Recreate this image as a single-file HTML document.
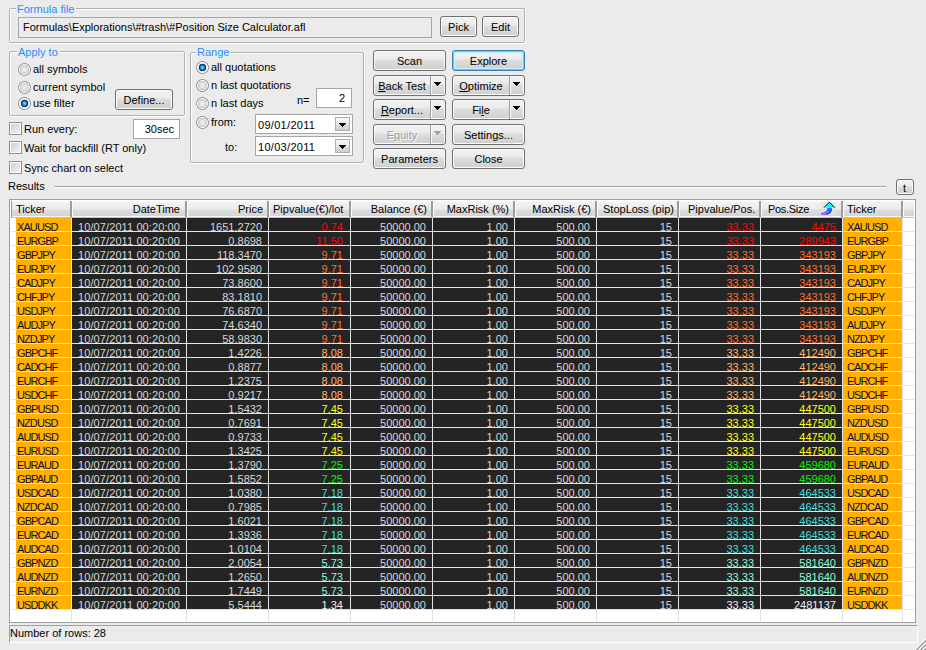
<!DOCTYPE html>
<html><head><meta charset="utf-8"><style>
html,body{margin:0;padding:0;}
body{width:926px;height:650px;overflow:hidden;background:#EBEBEB;position:relative;font-family:"Liberation Sans",sans-serif;font-size:11px;color:#000;}
.a{position:absolute;}
.t{position:absolute;white-space:nowrap;line-height:13px;height:13px;}
.grp{position:absolute;box-sizing:border-box;border:1px solid #B0B0B0;border-radius:2px;box-shadow:inset 1px 1px 0 #fff, 1px 1px 0 #fff;}
.gl{position:absolute;background:#EBEBEB;color:#2E8BFF;padding:0 2px 0 1px;line-height:13px;white-space:nowrap;}
.btn{position:absolute;box-sizing:border-box;height:21px;border:1px solid #707070;border-radius:3px;background:linear-gradient(#F2F2F2 0,#EBEBEB 8px,#DDDDDD 9px,#CFCFCF 100%);box-shadow:inset 0 0 0 1px #FBFBFB;text-align:center;line-height:13px;white-space:nowrap;padding-top:4px;}
.edit{position:absolute;box-sizing:border-box;border:1px solid #A5A5A5;background:#fff;}
.radio{position:absolute;width:13px;height:13px;border-radius:50%;background:radial-gradient(circle at 6.5px 6.5px,#F0F2F4 0,#DCDFE2 3px,#C4C8CC 4.4px,#FAFAFA 4.8px,#FAFAFA 5.2px,#9C9C9C 5.6px,#8C8C8C 6.4px,rgba(140,140,140,0) 6.8px);}
.radio.on{background:radial-gradient(circle at 6.5px 6.5px,#90E8FF 0,#40B0F0 1.2px,#1A78C0 2.2px,#0C3458 3px,#1A3E60 3.5px,#D8DCE0 3.9px,#F6F6F6 4.6px,#FAFAFA 5.2px,#9C9C9C 5.6px,#8C8C8C 6.4px,rgba(140,140,140,0) 6.8px);}
.chk{position:absolute;width:13px;height:13px;box-sizing:border-box;border:1px solid #8E8F8F;background:linear-gradient(135deg,#C8CCD2,#F6F6F6);box-shadow:inset 0 0 0 1px #FFFFFF;}
.arr{position:absolute;width:0;height:0;border-left:4px solid transparent;border-right:4px solid transparent;border-top:4px solid #000;}
</style></head><body>
<div class="grp" style="left:9px;top:8px;width:516px;height:35px;"></div>
<div class="gl" style="left:16px;top:3px;">Formula file</div>
<div class="a" style="left:18px;top:17px;width:412px;height:19px;border:1px solid #A5A5A5;background:#EBEBEB;"></div>
<div class="t" style="left:23px;top:21px;">Formulas\Explorations\#trash\#Position Size Calculator.afl</div>
<div class="btn" style="left:440px;top:16px;width:37px;height:21px;">Pick</div>
<div class="btn" style="left:482px;top:16px;width:37px;height:21px;">Edit</div>
<div class="grp" style="left:9px;top:51px;width:176px;height:65px;"></div>
<div class="gl" style="left:17px;top:46px;">Apply to</div>
<div class="radio" style="left:18px;top:63px;"></div>
<div class="t" style="left:33px;top:63px;">all symbols</div>
<div class="radio" style="left:18px;top:81px;"></div>
<div class="t" style="left:33px;top:81px;">current symbol</div>
<div class="radio on" style="left:18px;top:97px;"></div>
<div class="t" style="left:33px;top:97px;">use filter</div>
<div class="btn" style="left:115px;top:89px;width:58px;height:21px;">Define...</div>
<div class="chk" style="left:9px;top:122px;"></div>
<div class="t" style="left:24px;top:123px;">Run every:</div>
<div class="chk" style="left:9px;top:141px;"></div>
<div class="t" style="left:24px;top:142px;">Wait for backfill (RT only)</div>
<div class="chk" style="left:9px;top:161px;"></div>
<div class="t" style="left:24px;top:162px;">Sync chart on select</div>
<div class="edit" style="left:133px;top:119px;width:47px;height:20px;"></div>
<div class="t" style="left:-26px;top:123px;width:200px;text-align:right;">30sec</div>
<div class="grp" style="left:190px;top:52px;width:174px;height:111px;"></div>
<div class="gl" style="left:196px;top:46px;">Range</div>
<div class="radio on" style="left:196px;top:61px;"></div>
<div class="t" style="left:211px;top:61px;">all quotations</div>
<div class="radio" style="left:196px;top:79px;"></div>
<div class="t" style="left:211px;top:79px;">n last quotations</div>
<div class="radio" style="left:196px;top:97px;"></div>
<div class="t" style="left:211px;top:97px;">n last days</div>
<div class="radio" style="left:196px;top:116px;"></div>
<div class="t" style="left:211px;top:116px;">from:</div>
<div class="t" style="left:297px;top:94px;">n=</div>
<div class="edit" style="left:316px;top:88px;width:36px;height:20px;"></div>
<div class="t" style="left:145px;top:92px;width:200px;text-align:right;">2</div>
<div class="t" style="left:225px;top:141px;">to:</div>
<div class="edit" style="left:255px;top:114px;width:98px;height:20px;"></div>
<div class="t" style="left:258px;top:119px;letter-spacing:0.3px;">09/01/2011</div>
<div class="a" style="left:335px;top:117px;width:13px;height:12px;border:1px solid #ADADAD;background:linear-gradient(#F6F6F6,#EAEAEA 6px,#DCDCDC 7px,#D0D0D0);"></div>
<div class="a" style="left:339px;top:123px;width:7px;height:1px;background:#000;"></div><div class="a" style="left:340px;top:124px;width:5px;height:1px;background:#000;"></div><div class="a" style="left:341px;top:125px;width:3px;height:1px;background:#000;"></div><div class="a" style="left:342px;top:126px;width:1px;height:1px;background:#000;"></div>
<div class="edit" style="left:255px;top:136px;width:98px;height:20px;"></div>
<div class="t" style="left:258px;top:141px;letter-spacing:0.3px;">10/03/2011</div>
<div class="a" style="left:335px;top:139px;width:13px;height:12px;border:1px solid #ADADAD;background:linear-gradient(#F6F6F6,#EAEAEA 6px,#DCDCDC 7px,#D0D0D0);"></div>
<div class="a" style="left:339px;top:145px;width:7px;height:1px;background:#000;"></div><div class="a" style="left:340px;top:146px;width:5px;height:1px;background:#000;"></div><div class="a" style="left:341px;top:147px;width:3px;height:1px;background:#000;"></div><div class="a" style="left:342px;top:148px;width:1px;height:1px;background:#000;"></div>
<div class="btn" style="left:373px;top:50px;width:73px;height:21px;">Scan</div>
<div class="btn" style="left:452px;top:50px;width:73px;height:21px;border-color:#3C7FB1;box-shadow:inset 0 0 0 1px #48D8FB, inset 0 0 0 2px #C8F0FC;">Explore</div>
<div class="btn" style="left:373px;top:75px;width:73px;height:21px;padding-top:0;"><div class="t" style="left:0;top:4px;width:56px;text-align:center;"><u>B</u>ack Test</div><div class="a" style="left:56px;top:0;width:1px;height:19px;background:#9C9C9C;"></div><div class="a" style="left:57px;top:0;width:1px;height:19px;background:#FAFAFA;"></div><div class="a" style="left:60px;top:6px;width:7px;height:1px;background:#000;"></div><div class="a" style="left:61px;top:7px;width:5px;height:1px;background:#000;"></div><div class="a" style="left:62px;top:8px;width:3px;height:1px;background:#000;"></div><div class="a" style="left:63px;top:9px;width:1px;height:1px;background:#000;"></div></div>
<div class="btn" style="left:452px;top:75px;width:73px;height:21px;padding-top:0;"><div class="t" style="left:0;top:4px;width:56px;text-align:center;"><u>O</u>ptimize</div><div class="a" style="left:56px;top:0;width:1px;height:19px;background:#9C9C9C;"></div><div class="a" style="left:57px;top:0;width:1px;height:19px;background:#FAFAFA;"></div><div class="a" style="left:60px;top:6px;width:7px;height:1px;background:#000;"></div><div class="a" style="left:61px;top:7px;width:5px;height:1px;background:#000;"></div><div class="a" style="left:62px;top:8px;width:3px;height:1px;background:#000;"></div><div class="a" style="left:63px;top:9px;width:1px;height:1px;background:#000;"></div></div>
<div class="btn" style="left:373px;top:99px;width:73px;height:21px;padding-top:0;"><div class="t" style="left:0;top:4px;width:56px;text-align:center;"><u>R</u>eport...</div><div class="a" style="left:56px;top:0;width:1px;height:19px;background:#9C9C9C;"></div><div class="a" style="left:57px;top:0;width:1px;height:19px;background:#FAFAFA;"></div><div class="a" style="left:60px;top:6px;width:7px;height:1px;background:#000;"></div><div class="a" style="left:61px;top:7px;width:5px;height:1px;background:#000;"></div><div class="a" style="left:62px;top:8px;width:3px;height:1px;background:#000;"></div><div class="a" style="left:63px;top:9px;width:1px;height:1px;background:#000;"></div></div>
<div class="btn" style="left:452px;top:99px;width:73px;height:21px;padding-top:0;"><div class="t" style="left:0;top:4px;width:56px;text-align:center;">Fi<u>l</u>e</div><div class="a" style="left:56px;top:0;width:1px;height:19px;background:#9C9C9C;"></div><div class="a" style="left:57px;top:0;width:1px;height:19px;background:#FAFAFA;"></div><div class="a" style="left:60px;top:6px;width:7px;height:1px;background:#000;"></div><div class="a" style="left:61px;top:7px;width:5px;height:1px;background:#000;"></div><div class="a" style="left:62px;top:8px;width:3px;height:1px;background:#000;"></div><div class="a" style="left:63px;top:9px;width:1px;height:1px;background:#000;"></div></div>
<div class="btn" style="left:373px;top:124px;width:73px;height:21px;color:#A0A0A0;text-shadow:1px 1px 0 #FFFFFF;padding-top:0;"><div class="t" style="left:0;top:4px;width:56px;text-align:center;">E<u>q</u>uity</div><div class="a" style="left:56px;top:0;width:1px;height:19px;background:#9C9C9C;"></div><div class="a" style="left:57px;top:0;width:1px;height:19px;background:#FAFAFA;"></div><div class="a" style="left:60px;top:6px;width:7px;height:1px;background:#A0A0A0;"></div><div class="a" style="left:61px;top:7px;width:5px;height:1px;background:#A0A0A0;"></div><div class="a" style="left:62px;top:8px;width:3px;height:1px;background:#A0A0A0;"></div><div class="a" style="left:63px;top:9px;width:1px;height:1px;background:#A0A0A0;"></div></div>
<div class="btn" style="left:452px;top:124px;width:73px;height:21px;">Settings...</div>
<div class="btn" style="left:373px;top:148px;width:73px;height:21px;">Parameters</div>
<div class="btn" style="left:452px;top:148px;width:73px;height:21px;">Close</div>
<div class="t" style="left:8px;top:180px;">Results</div>
<div class="a" style="left:54px;top:186px;width:832px;height:1px;background:#A0A0A0;box-shadow:0 1px 0 #fff;"></div>
<div class="btn" style="left:896px;top:179px;width:18px;height:16px;padding-top:0;background:linear-gradient(#F2F2F2 0,#EBEBEB 6px,#DDDDDD 7px,#CFCFCF 100%);"><div class="t" style="left:6px;top:2px;">t</div></div>
<div class="a" style="left:9px;top:199px;width:905px;height:422px;border:1px solid #A0A0A0;background:#fff;"></div>
<div class="a" style="left:11px;top:201px;width:903px;height:15px;background:linear-gradient(#FAFAFA 0,#F0F0F0 2px,#ECECEC 8px,#DCDCDC 9px,#D4D4D4 15px);"></div>
<div class="a" style="left:11px;top:216px;width:903px;height:1px;background:#F8F8F8;"></div>
<div class="a" style="left:11px;top:217px;width:903px;height:1px;background:#BCC3CC;"></div>
<div class="a" style="left:11px;top:201px;width:1px;height:17px;background:#9A9A9A;"></div>
<div class="a" style="left:70px;top:201px;width:2px;height:16px;background:#9C9C9C;"></div>
<div class="a" style="left:72px;top:201px;width:1px;height:16px;background:#FAFAFA;"></div>
<div class="a" style="left:185px;top:201px;width:2px;height:16px;background:#9C9C9C;"></div>
<div class="a" style="left:187px;top:201px;width:1px;height:16px;background:#FAFAFA;"></div>
<div class="a" style="left:267px;top:201px;width:2px;height:16px;background:#9C9C9C;"></div>
<div class="a" style="left:269px;top:201px;width:1px;height:16px;background:#FAFAFA;"></div>
<div class="a" style="left:349px;top:201px;width:2px;height:16px;background:#9C9C9C;"></div>
<div class="a" style="left:351px;top:201px;width:1px;height:16px;background:#FAFAFA;"></div>
<div class="a" style="left:431px;top:201px;width:2px;height:16px;background:#9C9C9C;"></div>
<div class="a" style="left:433px;top:201px;width:1px;height:16px;background:#FAFAFA;"></div>
<div class="a" style="left:513px;top:201px;width:2px;height:16px;background:#9C9C9C;"></div>
<div class="a" style="left:515px;top:201px;width:1px;height:16px;background:#FAFAFA;"></div>
<div class="a" style="left:595px;top:201px;width:2px;height:16px;background:#9C9C9C;"></div>
<div class="a" style="left:597px;top:201px;width:1px;height:16px;background:#FAFAFA;"></div>
<div class="a" style="left:677px;top:201px;width:2px;height:16px;background:#9C9C9C;"></div>
<div class="a" style="left:679px;top:201px;width:1px;height:16px;background:#FAFAFA;"></div>
<div class="a" style="left:759px;top:201px;width:2px;height:16px;background:#9C9C9C;"></div>
<div class="a" style="left:761px;top:201px;width:1px;height:16px;background:#FAFAFA;"></div>
<div class="a" style="left:841px;top:201px;width:2px;height:16px;background:#9C9C9C;"></div>
<div class="a" style="left:843px;top:201px;width:1px;height:16px;background:#FAFAFA;"></div>
<div class="a" style="left:901px;top:201px;width:2px;height:16px;background:#9C9C9C;"></div>
<div class="a" style="left:903px;top:201px;width:1px;height:16px;background:#FAFAFA;"></div>
<div class="t" style="left:16px;top:203px;">Ticker</div>
<div class="t" style="left:-20px;top:203px;width:200px;text-align:right;">DateTime</div>
<div class="t" style="left:273px;top:203px;">Pipvalue(€)/lot</div>
<div class="t" style="left:227px;top:203px;width:200px;text-align:right;">Balance (€)</div>
<div class="t" style="left:63px;top:203px;width:200px;text-align:right;">Price</div>
<div class="t" style="left:309px;top:203px;width:200px;text-align:right;">MaxRisk (%)</div>
<div class="t" style="left:391px;top:203px;width:200px;text-align:right;">MaxRisk (€)</div>
<div class="t" style="left:603px;top:203px;">StopLoss (pip)</div>
<div class="t" style="left:688px;top:203px;">Pipvalue/Pos.</div>
<div class="t" style="left:768px;top:203px;letter-spacing:-0.3px;">Pos.Size</div>
<div class="t" style="left:847px;top:203px;">Ticker</div>
<svg class="a" style="left:818px;top:200px;" width="20" height="17" viewBox="0 0 20 17"><defs><linearGradient id="sg" x1="0" y1="0" x2="0.3" y2="1"><stop offset="0" stop-color="#00D8FF"/><stop offset="0.5" stop-color="#1E6CFF"/><stop offset="1" stop-color="#3A2AF0"/></linearGradient></defs><rect x="3" y="2" width="15" height="13" fill="#E4E4E4" opacity="0.7"/><path d="M9 7.5 L14 7.5 L14 10.5 Q13 14 8.5 14.8 L3 14.5 L3.5 12.8 Q8 12.2 9 10 Z" fill="url(#sg)"/><path d="M5.2 13.6 Q9 13.2 10.8 11" stroke="#D8E8FF" stroke-width="0.8" fill="none"/><path d="M6 7.6 L11.4 2.2 L16.8 7.6 Z" fill="#00FFFF"/><path d="M6 7.6 L11.4 2.2 L16.8 7.6" fill="none" stroke="#000" stroke-width="1"/></svg>
<div class="a" style="left:11px;top:231px;width:903px;height:1px;background:#E3E3E3;"></div>
<div class="a" style="left:16px;top:218px;width:55px;height:13px;background:#FFB000;"></div>
<div class="a" style="left:843px;top:218px;width:59px;height:13px;background:#FFB000;"></div>
<div class="a" style="left:72px;top:218px;width:770px;height:13px;background:#242424;"></div>
<div class="t" style="left:17px;top:221px;color:#10103A;letter-spacing:-0.9px;">XAUUSD</div>
<div class="t" style="left:-20px;top:221px;width:200px;text-align:right;color:#D6D6D6;letter-spacing:0.1px;">10/07/2011 00:20:00</div>
<div class="t" style="left:62px;top:221px;width:200px;text-align:right;color:#D6D6D6;">1651.2720</div>
<div class="t" style="left:143px;top:221px;width:200px;text-align:right;color:#F80808;">0.74</div>
<div class="t" style="left:226px;top:221px;width:200px;text-align:right;color:#D6D6D6;">50000.00</div>
<div class="t" style="left:308px;top:221px;width:200px;text-align:right;color:#D6D6D6;">1.00</div>
<div class="t" style="left:390px;top:221px;width:200px;text-align:right;color:#D6D6D6;">500.00</div>
<div class="t" style="left:472px;top:221px;width:200px;text-align:right;color:#D6D6D6;">15</div>
<div class="t" style="left:554px;top:221px;width:200px;text-align:right;color:#F80808;">33.33</div>
<div class="t" style="left:636px;top:221px;width:200px;text-align:right;color:#F80808;">4475</div>
<div class="t" style="left:847px;top:221px;color:#10103A;letter-spacing:-0.9px;">XAUUSD</div>
<div class="a" style="left:11px;top:245px;width:903px;height:1px;background:#E3E3E3;"></div>
<div class="a" style="left:16px;top:232px;width:55px;height:13px;background:#FFB000;"></div>
<div class="a" style="left:843px;top:232px;width:59px;height:13px;background:#FFB000;"></div>
<div class="a" style="left:72px;top:232px;width:770px;height:13px;background:#242424;"></div>
<div class="t" style="left:17px;top:235px;color:#10103A;letter-spacing:-0.9px;">EURGBP</div>
<div class="t" style="left:-20px;top:235px;width:200px;text-align:right;color:#D6D6D6;letter-spacing:0.1px;">10/07/2011 00:20:00</div>
<div class="t" style="left:62px;top:235px;width:200px;text-align:right;color:#D6D6D6;">0.8698</div>
<div class="t" style="left:143px;top:235px;width:200px;text-align:right;color:#F80808;">11.50</div>
<div class="t" style="left:226px;top:235px;width:200px;text-align:right;color:#D6D6D6;">50000.00</div>
<div class="t" style="left:308px;top:235px;width:200px;text-align:right;color:#D6D6D6;">1.00</div>
<div class="t" style="left:390px;top:235px;width:200px;text-align:right;color:#D6D6D6;">500.00</div>
<div class="t" style="left:472px;top:235px;width:200px;text-align:right;color:#D6D6D6;">15</div>
<div class="t" style="left:554px;top:235px;width:200px;text-align:right;color:#F80808;">33.33</div>
<div class="t" style="left:636px;top:235px;width:200px;text-align:right;color:#F80808;">289943</div>
<div class="t" style="left:847px;top:235px;color:#10103A;letter-spacing:-0.9px;">EURGBP</div>
<div class="a" style="left:11px;top:259px;width:903px;height:1px;background:#E3E3E3;"></div>
<div class="a" style="left:16px;top:246px;width:55px;height:13px;background:#FFB000;"></div>
<div class="a" style="left:843px;top:246px;width:59px;height:13px;background:#FFB000;"></div>
<div class="a" style="left:72px;top:246px;width:770px;height:13px;background:#242424;"></div>
<div class="t" style="left:17px;top:249px;color:#10103A;letter-spacing:-0.9px;">GBPJPY</div>
<div class="t" style="left:-20px;top:249px;width:200px;text-align:right;color:#D6D6D6;letter-spacing:0.1px;">10/07/2011 00:20:00</div>
<div class="t" style="left:62px;top:249px;width:200px;text-align:right;color:#D6D6D6;">118.3470</div>
<div class="t" style="left:143px;top:249px;width:200px;text-align:right;color:#FF7030;">9.71</div>
<div class="t" style="left:226px;top:249px;width:200px;text-align:right;color:#D6D6D6;">50000.00</div>
<div class="t" style="left:308px;top:249px;width:200px;text-align:right;color:#D6D6D6;">1.00</div>
<div class="t" style="left:390px;top:249px;width:200px;text-align:right;color:#D6D6D6;">500.00</div>
<div class="t" style="left:472px;top:249px;width:200px;text-align:right;color:#D6D6D6;">15</div>
<div class="t" style="left:554px;top:249px;width:200px;text-align:right;color:#FF7030;">33.33</div>
<div class="t" style="left:636px;top:249px;width:200px;text-align:right;color:#FF7030;">343193</div>
<div class="t" style="left:847px;top:249px;color:#10103A;letter-spacing:-0.9px;">GBPJPY</div>
<div class="a" style="left:11px;top:273px;width:903px;height:1px;background:#E3E3E3;"></div>
<div class="a" style="left:16px;top:260px;width:55px;height:13px;background:#FFB000;"></div>
<div class="a" style="left:843px;top:260px;width:59px;height:13px;background:#FFB000;"></div>
<div class="a" style="left:72px;top:260px;width:770px;height:13px;background:#242424;"></div>
<div class="t" style="left:17px;top:263px;color:#10103A;letter-spacing:-0.9px;">EURJPY</div>
<div class="t" style="left:-20px;top:263px;width:200px;text-align:right;color:#D6D6D6;letter-spacing:0.1px;">10/07/2011 00:20:00</div>
<div class="t" style="left:62px;top:263px;width:200px;text-align:right;color:#D6D6D6;">102.9580</div>
<div class="t" style="left:143px;top:263px;width:200px;text-align:right;color:#FF7030;">9.71</div>
<div class="t" style="left:226px;top:263px;width:200px;text-align:right;color:#D6D6D6;">50000.00</div>
<div class="t" style="left:308px;top:263px;width:200px;text-align:right;color:#D6D6D6;">1.00</div>
<div class="t" style="left:390px;top:263px;width:200px;text-align:right;color:#D6D6D6;">500.00</div>
<div class="t" style="left:472px;top:263px;width:200px;text-align:right;color:#D6D6D6;">15</div>
<div class="t" style="left:554px;top:263px;width:200px;text-align:right;color:#FF7030;">33.33</div>
<div class="t" style="left:636px;top:263px;width:200px;text-align:right;color:#FF7030;">343193</div>
<div class="t" style="left:847px;top:263px;color:#10103A;letter-spacing:-0.9px;">EURJPY</div>
<div class="a" style="left:11px;top:287px;width:903px;height:1px;background:#E3E3E3;"></div>
<div class="a" style="left:16px;top:274px;width:55px;height:13px;background:#FFB000;"></div>
<div class="a" style="left:843px;top:274px;width:59px;height:13px;background:#FFB000;"></div>
<div class="a" style="left:72px;top:274px;width:770px;height:13px;background:#242424;"></div>
<div class="t" style="left:17px;top:277px;color:#10103A;letter-spacing:-0.9px;">CADJPY</div>
<div class="t" style="left:-20px;top:277px;width:200px;text-align:right;color:#D6D6D6;letter-spacing:0.1px;">10/07/2011 00:20:00</div>
<div class="t" style="left:62px;top:277px;width:200px;text-align:right;color:#D6D6D6;">73.8600</div>
<div class="t" style="left:143px;top:277px;width:200px;text-align:right;color:#FF7030;">9.71</div>
<div class="t" style="left:226px;top:277px;width:200px;text-align:right;color:#D6D6D6;">50000.00</div>
<div class="t" style="left:308px;top:277px;width:200px;text-align:right;color:#D6D6D6;">1.00</div>
<div class="t" style="left:390px;top:277px;width:200px;text-align:right;color:#D6D6D6;">500.00</div>
<div class="t" style="left:472px;top:277px;width:200px;text-align:right;color:#D6D6D6;">15</div>
<div class="t" style="left:554px;top:277px;width:200px;text-align:right;color:#FF7030;">33.33</div>
<div class="t" style="left:636px;top:277px;width:200px;text-align:right;color:#FF7030;">343193</div>
<div class="t" style="left:847px;top:277px;color:#10103A;letter-spacing:-0.9px;">CADJPY</div>
<div class="a" style="left:11px;top:301px;width:903px;height:1px;background:#E3E3E3;"></div>
<div class="a" style="left:16px;top:288px;width:55px;height:13px;background:#FFB000;"></div>
<div class="a" style="left:843px;top:288px;width:59px;height:13px;background:#FFB000;"></div>
<div class="a" style="left:72px;top:288px;width:770px;height:13px;background:#242424;"></div>
<div class="t" style="left:17px;top:291px;color:#10103A;letter-spacing:-0.9px;">CHFJPY</div>
<div class="t" style="left:-20px;top:291px;width:200px;text-align:right;color:#D6D6D6;letter-spacing:0.1px;">10/07/2011 00:20:00</div>
<div class="t" style="left:62px;top:291px;width:200px;text-align:right;color:#D6D6D6;">83.1810</div>
<div class="t" style="left:143px;top:291px;width:200px;text-align:right;color:#FF7030;">9.71</div>
<div class="t" style="left:226px;top:291px;width:200px;text-align:right;color:#D6D6D6;">50000.00</div>
<div class="t" style="left:308px;top:291px;width:200px;text-align:right;color:#D6D6D6;">1.00</div>
<div class="t" style="left:390px;top:291px;width:200px;text-align:right;color:#D6D6D6;">500.00</div>
<div class="t" style="left:472px;top:291px;width:200px;text-align:right;color:#D6D6D6;">15</div>
<div class="t" style="left:554px;top:291px;width:200px;text-align:right;color:#FF7030;">33.33</div>
<div class="t" style="left:636px;top:291px;width:200px;text-align:right;color:#FF7030;">343193</div>
<div class="t" style="left:847px;top:291px;color:#10103A;letter-spacing:-0.9px;">CHFJPY</div>
<div class="a" style="left:11px;top:315px;width:903px;height:1px;background:#E3E3E3;"></div>
<div class="a" style="left:16px;top:302px;width:55px;height:13px;background:#FFB000;"></div>
<div class="a" style="left:843px;top:302px;width:59px;height:13px;background:#FFB000;"></div>
<div class="a" style="left:72px;top:302px;width:770px;height:13px;background:#242424;"></div>
<div class="t" style="left:17px;top:305px;color:#10103A;letter-spacing:-0.9px;">USDJPY</div>
<div class="t" style="left:-20px;top:305px;width:200px;text-align:right;color:#D6D6D6;letter-spacing:0.1px;">10/07/2011 00:20:00</div>
<div class="t" style="left:62px;top:305px;width:200px;text-align:right;color:#D6D6D6;">76.6870</div>
<div class="t" style="left:143px;top:305px;width:200px;text-align:right;color:#FF7030;">9.71</div>
<div class="t" style="left:226px;top:305px;width:200px;text-align:right;color:#D6D6D6;">50000.00</div>
<div class="t" style="left:308px;top:305px;width:200px;text-align:right;color:#D6D6D6;">1.00</div>
<div class="t" style="left:390px;top:305px;width:200px;text-align:right;color:#D6D6D6;">500.00</div>
<div class="t" style="left:472px;top:305px;width:200px;text-align:right;color:#D6D6D6;">15</div>
<div class="t" style="left:554px;top:305px;width:200px;text-align:right;color:#FF7030;">33.33</div>
<div class="t" style="left:636px;top:305px;width:200px;text-align:right;color:#FF7030;">343193</div>
<div class="t" style="left:847px;top:305px;color:#10103A;letter-spacing:-0.9px;">USDJPY</div>
<div class="a" style="left:11px;top:329px;width:903px;height:1px;background:#E3E3E3;"></div>
<div class="a" style="left:16px;top:316px;width:55px;height:13px;background:#FFB000;"></div>
<div class="a" style="left:843px;top:316px;width:59px;height:13px;background:#FFB000;"></div>
<div class="a" style="left:72px;top:316px;width:770px;height:13px;background:#242424;"></div>
<div class="t" style="left:17px;top:319px;color:#10103A;letter-spacing:-0.9px;">AUDJPY</div>
<div class="t" style="left:-20px;top:319px;width:200px;text-align:right;color:#D6D6D6;letter-spacing:0.1px;">10/07/2011 00:20:00</div>
<div class="t" style="left:62px;top:319px;width:200px;text-align:right;color:#D6D6D6;">74.6340</div>
<div class="t" style="left:143px;top:319px;width:200px;text-align:right;color:#FF7030;">9.71</div>
<div class="t" style="left:226px;top:319px;width:200px;text-align:right;color:#D6D6D6;">50000.00</div>
<div class="t" style="left:308px;top:319px;width:200px;text-align:right;color:#D6D6D6;">1.00</div>
<div class="t" style="left:390px;top:319px;width:200px;text-align:right;color:#D6D6D6;">500.00</div>
<div class="t" style="left:472px;top:319px;width:200px;text-align:right;color:#D6D6D6;">15</div>
<div class="t" style="left:554px;top:319px;width:200px;text-align:right;color:#FF7030;">33.33</div>
<div class="t" style="left:636px;top:319px;width:200px;text-align:right;color:#FF7030;">343193</div>
<div class="t" style="left:847px;top:319px;color:#10103A;letter-spacing:-0.9px;">AUDJPY</div>
<div class="a" style="left:11px;top:343px;width:903px;height:1px;background:#E3E3E3;"></div>
<div class="a" style="left:16px;top:330px;width:55px;height:13px;background:#FFB000;"></div>
<div class="a" style="left:843px;top:330px;width:59px;height:13px;background:#FFB000;"></div>
<div class="a" style="left:72px;top:330px;width:770px;height:13px;background:#242424;"></div>
<div class="t" style="left:17px;top:333px;color:#10103A;letter-spacing:-0.9px;">NZDJPY</div>
<div class="t" style="left:-20px;top:333px;width:200px;text-align:right;color:#D6D6D6;letter-spacing:0.1px;">10/07/2011 00:20:00</div>
<div class="t" style="left:62px;top:333px;width:200px;text-align:right;color:#D6D6D6;">58.9830</div>
<div class="t" style="left:143px;top:333px;width:200px;text-align:right;color:#FF7030;">9.71</div>
<div class="t" style="left:226px;top:333px;width:200px;text-align:right;color:#D6D6D6;">50000.00</div>
<div class="t" style="left:308px;top:333px;width:200px;text-align:right;color:#D6D6D6;">1.00</div>
<div class="t" style="left:390px;top:333px;width:200px;text-align:right;color:#D6D6D6;">500.00</div>
<div class="t" style="left:472px;top:333px;width:200px;text-align:right;color:#D6D6D6;">15</div>
<div class="t" style="left:554px;top:333px;width:200px;text-align:right;color:#FF7030;">33.33</div>
<div class="t" style="left:636px;top:333px;width:200px;text-align:right;color:#FF7030;">343193</div>
<div class="t" style="left:847px;top:333px;color:#10103A;letter-spacing:-0.9px;">NZDJPY</div>
<div class="a" style="left:11px;top:357px;width:903px;height:1px;background:#E3E3E3;"></div>
<div class="a" style="left:16px;top:344px;width:55px;height:13px;background:#FFB000;"></div>
<div class="a" style="left:843px;top:344px;width:59px;height:13px;background:#FFB000;"></div>
<div class="a" style="left:72px;top:344px;width:770px;height:13px;background:#242424;"></div>
<div class="t" style="left:17px;top:347px;color:#10103A;letter-spacing:-0.9px;">GBPCHF</div>
<div class="t" style="left:-20px;top:347px;width:200px;text-align:right;color:#D6D6D6;letter-spacing:0.1px;">10/07/2011 00:20:00</div>
<div class="t" style="left:62px;top:347px;width:200px;text-align:right;color:#D6D6D6;">1.4226</div>
<div class="t" style="left:143px;top:347px;width:200px;text-align:right;color:#FFB468;">8.08</div>
<div class="t" style="left:226px;top:347px;width:200px;text-align:right;color:#D6D6D6;">50000.00</div>
<div class="t" style="left:308px;top:347px;width:200px;text-align:right;color:#D6D6D6;">1.00</div>
<div class="t" style="left:390px;top:347px;width:200px;text-align:right;color:#D6D6D6;">500.00</div>
<div class="t" style="left:472px;top:347px;width:200px;text-align:right;color:#D6D6D6;">15</div>
<div class="t" style="left:554px;top:347px;width:200px;text-align:right;color:#FFB468;">33.33</div>
<div class="t" style="left:636px;top:347px;width:200px;text-align:right;color:#FFB468;">412490</div>
<div class="t" style="left:847px;top:347px;color:#10103A;letter-spacing:-0.9px;">GBPCHF</div>
<div class="a" style="left:11px;top:371px;width:903px;height:1px;background:#E3E3E3;"></div>
<div class="a" style="left:16px;top:358px;width:55px;height:13px;background:#FFB000;"></div>
<div class="a" style="left:843px;top:358px;width:59px;height:13px;background:#FFB000;"></div>
<div class="a" style="left:72px;top:358px;width:770px;height:13px;background:#242424;"></div>
<div class="t" style="left:17px;top:361px;color:#10103A;letter-spacing:-0.9px;">CADCHF</div>
<div class="t" style="left:-20px;top:361px;width:200px;text-align:right;color:#D6D6D6;letter-spacing:0.1px;">10/07/2011 00:20:00</div>
<div class="t" style="left:62px;top:361px;width:200px;text-align:right;color:#D6D6D6;">0.8877</div>
<div class="t" style="left:143px;top:361px;width:200px;text-align:right;color:#FFB468;">8.08</div>
<div class="t" style="left:226px;top:361px;width:200px;text-align:right;color:#D6D6D6;">50000.00</div>
<div class="t" style="left:308px;top:361px;width:200px;text-align:right;color:#D6D6D6;">1.00</div>
<div class="t" style="left:390px;top:361px;width:200px;text-align:right;color:#D6D6D6;">500.00</div>
<div class="t" style="left:472px;top:361px;width:200px;text-align:right;color:#D6D6D6;">15</div>
<div class="t" style="left:554px;top:361px;width:200px;text-align:right;color:#FFB468;">33.33</div>
<div class="t" style="left:636px;top:361px;width:200px;text-align:right;color:#FFB468;">412490</div>
<div class="t" style="left:847px;top:361px;color:#10103A;letter-spacing:-0.9px;">CADCHF</div>
<div class="a" style="left:11px;top:385px;width:903px;height:1px;background:#E3E3E3;"></div>
<div class="a" style="left:16px;top:372px;width:55px;height:13px;background:#FFB000;"></div>
<div class="a" style="left:843px;top:372px;width:59px;height:13px;background:#FFB000;"></div>
<div class="a" style="left:72px;top:372px;width:770px;height:13px;background:#242424;"></div>
<div class="t" style="left:17px;top:375px;color:#10103A;letter-spacing:-0.9px;">EURCHF</div>
<div class="t" style="left:-20px;top:375px;width:200px;text-align:right;color:#D6D6D6;letter-spacing:0.1px;">10/07/2011 00:20:00</div>
<div class="t" style="left:62px;top:375px;width:200px;text-align:right;color:#D6D6D6;">1.2375</div>
<div class="t" style="left:143px;top:375px;width:200px;text-align:right;color:#FFB468;">8.08</div>
<div class="t" style="left:226px;top:375px;width:200px;text-align:right;color:#D6D6D6;">50000.00</div>
<div class="t" style="left:308px;top:375px;width:200px;text-align:right;color:#D6D6D6;">1.00</div>
<div class="t" style="left:390px;top:375px;width:200px;text-align:right;color:#D6D6D6;">500.00</div>
<div class="t" style="left:472px;top:375px;width:200px;text-align:right;color:#D6D6D6;">15</div>
<div class="t" style="left:554px;top:375px;width:200px;text-align:right;color:#FFB468;">33.33</div>
<div class="t" style="left:636px;top:375px;width:200px;text-align:right;color:#FFB468;">412490</div>
<div class="t" style="left:847px;top:375px;color:#10103A;letter-spacing:-0.9px;">EURCHF</div>
<div class="a" style="left:11px;top:399px;width:903px;height:1px;background:#E3E3E3;"></div>
<div class="a" style="left:16px;top:386px;width:55px;height:13px;background:#FFB000;"></div>
<div class="a" style="left:843px;top:386px;width:59px;height:13px;background:#FFB000;"></div>
<div class="a" style="left:72px;top:386px;width:770px;height:13px;background:#242424;"></div>
<div class="t" style="left:17px;top:389px;color:#10103A;letter-spacing:-0.9px;">USDCHF</div>
<div class="t" style="left:-20px;top:389px;width:200px;text-align:right;color:#D6D6D6;letter-spacing:0.1px;">10/07/2011 00:20:00</div>
<div class="t" style="left:62px;top:389px;width:200px;text-align:right;color:#D6D6D6;">0.9217</div>
<div class="t" style="left:143px;top:389px;width:200px;text-align:right;color:#FFB468;">8.08</div>
<div class="t" style="left:226px;top:389px;width:200px;text-align:right;color:#D6D6D6;">50000.00</div>
<div class="t" style="left:308px;top:389px;width:200px;text-align:right;color:#D6D6D6;">1.00</div>
<div class="t" style="left:390px;top:389px;width:200px;text-align:right;color:#D6D6D6;">500.00</div>
<div class="t" style="left:472px;top:389px;width:200px;text-align:right;color:#D6D6D6;">15</div>
<div class="t" style="left:554px;top:389px;width:200px;text-align:right;color:#FFB468;">33.33</div>
<div class="t" style="left:636px;top:389px;width:200px;text-align:right;color:#FFB468;">412490</div>
<div class="t" style="left:847px;top:389px;color:#10103A;letter-spacing:-0.9px;">USDCHF</div>
<div class="a" style="left:11px;top:413px;width:903px;height:1px;background:#E3E3E3;"></div>
<div class="a" style="left:16px;top:400px;width:55px;height:13px;background:#FFB000;"></div>
<div class="a" style="left:843px;top:400px;width:59px;height:13px;background:#FFB000;"></div>
<div class="a" style="left:72px;top:400px;width:770px;height:13px;background:#242424;"></div>
<div class="t" style="left:17px;top:403px;color:#10103A;letter-spacing:-0.9px;">GBPUSD</div>
<div class="t" style="left:-20px;top:403px;width:200px;text-align:right;color:#D6D6D6;letter-spacing:0.1px;">10/07/2011 00:20:00</div>
<div class="t" style="left:62px;top:403px;width:200px;text-align:right;color:#D6D6D6;">1.5432</div>
<div class="t" style="left:143px;top:403px;width:200px;text-align:right;color:#FFFF10;">7.45</div>
<div class="t" style="left:226px;top:403px;width:200px;text-align:right;color:#D6D6D6;">50000.00</div>
<div class="t" style="left:308px;top:403px;width:200px;text-align:right;color:#D6D6D6;">1.00</div>
<div class="t" style="left:390px;top:403px;width:200px;text-align:right;color:#D6D6D6;">500.00</div>
<div class="t" style="left:472px;top:403px;width:200px;text-align:right;color:#D6D6D6;">15</div>
<div class="t" style="left:554px;top:403px;width:200px;text-align:right;color:#FFFF10;">33.33</div>
<div class="t" style="left:636px;top:403px;width:200px;text-align:right;color:#FFFF10;">447500</div>
<div class="t" style="left:847px;top:403px;color:#10103A;letter-spacing:-0.9px;">GBPUSD</div>
<div class="a" style="left:11px;top:427px;width:903px;height:1px;background:#E3E3E3;"></div>
<div class="a" style="left:16px;top:414px;width:55px;height:13px;background:#FFB000;"></div>
<div class="a" style="left:843px;top:414px;width:59px;height:13px;background:#FFB000;"></div>
<div class="a" style="left:72px;top:414px;width:770px;height:13px;background:#242424;"></div>
<div class="t" style="left:17px;top:417px;color:#10103A;letter-spacing:-0.9px;">NZDUSD</div>
<div class="t" style="left:-20px;top:417px;width:200px;text-align:right;color:#D6D6D6;letter-spacing:0.1px;">10/07/2011 00:20:00</div>
<div class="t" style="left:62px;top:417px;width:200px;text-align:right;color:#D6D6D6;">0.7691</div>
<div class="t" style="left:143px;top:417px;width:200px;text-align:right;color:#FFFF10;">7.45</div>
<div class="t" style="left:226px;top:417px;width:200px;text-align:right;color:#D6D6D6;">50000.00</div>
<div class="t" style="left:308px;top:417px;width:200px;text-align:right;color:#D6D6D6;">1.00</div>
<div class="t" style="left:390px;top:417px;width:200px;text-align:right;color:#D6D6D6;">500.00</div>
<div class="t" style="left:472px;top:417px;width:200px;text-align:right;color:#D6D6D6;">15</div>
<div class="t" style="left:554px;top:417px;width:200px;text-align:right;color:#FFFF10;">33.33</div>
<div class="t" style="left:636px;top:417px;width:200px;text-align:right;color:#FFFF10;">447500</div>
<div class="t" style="left:847px;top:417px;color:#10103A;letter-spacing:-0.9px;">NZDUSD</div>
<div class="a" style="left:11px;top:441px;width:903px;height:1px;background:#E3E3E3;"></div>
<div class="a" style="left:16px;top:428px;width:55px;height:13px;background:#FFB000;"></div>
<div class="a" style="left:843px;top:428px;width:59px;height:13px;background:#FFB000;"></div>
<div class="a" style="left:72px;top:428px;width:770px;height:13px;background:#242424;"></div>
<div class="t" style="left:17px;top:431px;color:#10103A;letter-spacing:-0.9px;">AUDUSD</div>
<div class="t" style="left:-20px;top:431px;width:200px;text-align:right;color:#D6D6D6;letter-spacing:0.1px;">10/07/2011 00:20:00</div>
<div class="t" style="left:62px;top:431px;width:200px;text-align:right;color:#D6D6D6;">0.9733</div>
<div class="t" style="left:143px;top:431px;width:200px;text-align:right;color:#FFFF10;">7.45</div>
<div class="t" style="left:226px;top:431px;width:200px;text-align:right;color:#D6D6D6;">50000.00</div>
<div class="t" style="left:308px;top:431px;width:200px;text-align:right;color:#D6D6D6;">1.00</div>
<div class="t" style="left:390px;top:431px;width:200px;text-align:right;color:#D6D6D6;">500.00</div>
<div class="t" style="left:472px;top:431px;width:200px;text-align:right;color:#D6D6D6;">15</div>
<div class="t" style="left:554px;top:431px;width:200px;text-align:right;color:#FFFF10;">33.33</div>
<div class="t" style="left:636px;top:431px;width:200px;text-align:right;color:#FFFF10;">447500</div>
<div class="t" style="left:847px;top:431px;color:#10103A;letter-spacing:-0.9px;">AUDUSD</div>
<div class="a" style="left:11px;top:455px;width:903px;height:1px;background:#E3E3E3;"></div>
<div class="a" style="left:16px;top:442px;width:55px;height:13px;background:#FFB000;"></div>
<div class="a" style="left:843px;top:442px;width:59px;height:13px;background:#FFB000;"></div>
<div class="a" style="left:72px;top:442px;width:770px;height:13px;background:#242424;"></div>
<div class="t" style="left:17px;top:445px;color:#10103A;letter-spacing:-0.9px;">EURUSD</div>
<div class="t" style="left:-20px;top:445px;width:200px;text-align:right;color:#D6D6D6;letter-spacing:0.1px;">10/07/2011 00:20:00</div>
<div class="t" style="left:62px;top:445px;width:200px;text-align:right;color:#D6D6D6;">1.3425</div>
<div class="t" style="left:143px;top:445px;width:200px;text-align:right;color:#FFFF10;">7.45</div>
<div class="t" style="left:226px;top:445px;width:200px;text-align:right;color:#D6D6D6;">50000.00</div>
<div class="t" style="left:308px;top:445px;width:200px;text-align:right;color:#D6D6D6;">1.00</div>
<div class="t" style="left:390px;top:445px;width:200px;text-align:right;color:#D6D6D6;">500.00</div>
<div class="t" style="left:472px;top:445px;width:200px;text-align:right;color:#D6D6D6;">15</div>
<div class="t" style="left:554px;top:445px;width:200px;text-align:right;color:#FFFF10;">33.33</div>
<div class="t" style="left:636px;top:445px;width:200px;text-align:right;color:#FFFF10;">447500</div>
<div class="t" style="left:847px;top:445px;color:#10103A;letter-spacing:-0.9px;">EURUSD</div>
<div class="a" style="left:11px;top:469px;width:903px;height:1px;background:#E3E3E3;"></div>
<div class="a" style="left:16px;top:456px;width:55px;height:13px;background:#FFB000;"></div>
<div class="a" style="left:843px;top:456px;width:59px;height:13px;background:#FFB000;"></div>
<div class="a" style="left:72px;top:456px;width:770px;height:13px;background:#242424;"></div>
<div class="t" style="left:17px;top:459px;color:#10103A;letter-spacing:-0.9px;">EURAUD</div>
<div class="t" style="left:-20px;top:459px;width:200px;text-align:right;color:#D6D6D6;letter-spacing:0.1px;">10/07/2011 00:20:00</div>
<div class="t" style="left:62px;top:459px;width:200px;text-align:right;color:#D6D6D6;">1.3790</div>
<div class="t" style="left:143px;top:459px;width:200px;text-align:right;color:#08F008;">7.25</div>
<div class="t" style="left:226px;top:459px;width:200px;text-align:right;color:#D6D6D6;">50000.00</div>
<div class="t" style="left:308px;top:459px;width:200px;text-align:right;color:#D6D6D6;">1.00</div>
<div class="t" style="left:390px;top:459px;width:200px;text-align:right;color:#D6D6D6;">500.00</div>
<div class="t" style="left:472px;top:459px;width:200px;text-align:right;color:#D6D6D6;">15</div>
<div class="t" style="left:554px;top:459px;width:200px;text-align:right;color:#08F008;">33.33</div>
<div class="t" style="left:636px;top:459px;width:200px;text-align:right;color:#08F008;">459680</div>
<div class="t" style="left:847px;top:459px;color:#10103A;letter-spacing:-0.9px;">EURAUD</div>
<div class="a" style="left:11px;top:483px;width:903px;height:1px;background:#E3E3E3;"></div>
<div class="a" style="left:16px;top:470px;width:55px;height:13px;background:#FFB000;"></div>
<div class="a" style="left:843px;top:470px;width:59px;height:13px;background:#FFB000;"></div>
<div class="a" style="left:72px;top:470px;width:770px;height:13px;background:#242424;"></div>
<div class="t" style="left:17px;top:473px;color:#10103A;letter-spacing:-0.9px;">GBPAUD</div>
<div class="t" style="left:-20px;top:473px;width:200px;text-align:right;color:#D6D6D6;letter-spacing:0.1px;">10/07/2011 00:20:00</div>
<div class="t" style="left:62px;top:473px;width:200px;text-align:right;color:#D6D6D6;">1.5852</div>
<div class="t" style="left:143px;top:473px;width:200px;text-align:right;color:#08F008;">7.25</div>
<div class="t" style="left:226px;top:473px;width:200px;text-align:right;color:#D6D6D6;">50000.00</div>
<div class="t" style="left:308px;top:473px;width:200px;text-align:right;color:#D6D6D6;">1.00</div>
<div class="t" style="left:390px;top:473px;width:200px;text-align:right;color:#D6D6D6;">500.00</div>
<div class="t" style="left:472px;top:473px;width:200px;text-align:right;color:#D6D6D6;">15</div>
<div class="t" style="left:554px;top:473px;width:200px;text-align:right;color:#08F008;">33.33</div>
<div class="t" style="left:636px;top:473px;width:200px;text-align:right;color:#08F008;">459680</div>
<div class="t" style="left:847px;top:473px;color:#10103A;letter-spacing:-0.9px;">GBPAUD</div>
<div class="a" style="left:11px;top:497px;width:903px;height:1px;background:#E3E3E3;"></div>
<div class="a" style="left:16px;top:484px;width:55px;height:13px;background:#FFB000;"></div>
<div class="a" style="left:843px;top:484px;width:59px;height:13px;background:#FFB000;"></div>
<div class="a" style="left:72px;top:484px;width:770px;height:13px;background:#242424;"></div>
<div class="t" style="left:17px;top:487px;color:#10103A;letter-spacing:-0.9px;">USDCAD</div>
<div class="t" style="left:-20px;top:487px;width:200px;text-align:right;color:#D6D6D6;letter-spacing:0.1px;">10/07/2011 00:20:00</div>
<div class="t" style="left:62px;top:487px;width:200px;text-align:right;color:#D6D6D6;">1.0380</div>
<div class="t" style="left:143px;top:487px;width:200px;text-align:right;color:#48DCD4;">7.18</div>
<div class="t" style="left:226px;top:487px;width:200px;text-align:right;color:#D6D6D6;">50000.00</div>
<div class="t" style="left:308px;top:487px;width:200px;text-align:right;color:#D6D6D6;">1.00</div>
<div class="t" style="left:390px;top:487px;width:200px;text-align:right;color:#D6D6D6;">500.00</div>
<div class="t" style="left:472px;top:487px;width:200px;text-align:right;color:#D6D6D6;">15</div>
<div class="t" style="left:554px;top:487px;width:200px;text-align:right;color:#48DCD4;">33.33</div>
<div class="t" style="left:636px;top:487px;width:200px;text-align:right;color:#48DCD4;">464533</div>
<div class="t" style="left:847px;top:487px;color:#10103A;letter-spacing:-0.9px;">USDCAD</div>
<div class="a" style="left:11px;top:511px;width:903px;height:1px;background:#E3E3E3;"></div>
<div class="a" style="left:16px;top:498px;width:55px;height:13px;background:#FFB000;"></div>
<div class="a" style="left:843px;top:498px;width:59px;height:13px;background:#FFB000;"></div>
<div class="a" style="left:72px;top:498px;width:770px;height:13px;background:#242424;"></div>
<div class="t" style="left:17px;top:501px;color:#10103A;letter-spacing:-0.9px;">NZDCAD</div>
<div class="t" style="left:-20px;top:501px;width:200px;text-align:right;color:#D6D6D6;letter-spacing:0.1px;">10/07/2011 00:20:00</div>
<div class="t" style="left:62px;top:501px;width:200px;text-align:right;color:#D6D6D6;">0.7985</div>
<div class="t" style="left:143px;top:501px;width:200px;text-align:right;color:#48DCD4;">7.18</div>
<div class="t" style="left:226px;top:501px;width:200px;text-align:right;color:#D6D6D6;">50000.00</div>
<div class="t" style="left:308px;top:501px;width:200px;text-align:right;color:#D6D6D6;">1.00</div>
<div class="t" style="left:390px;top:501px;width:200px;text-align:right;color:#D6D6D6;">500.00</div>
<div class="t" style="left:472px;top:501px;width:200px;text-align:right;color:#D6D6D6;">15</div>
<div class="t" style="left:554px;top:501px;width:200px;text-align:right;color:#48DCD4;">33.33</div>
<div class="t" style="left:636px;top:501px;width:200px;text-align:right;color:#48DCD4;">464533</div>
<div class="t" style="left:847px;top:501px;color:#10103A;letter-spacing:-0.9px;">NZDCAD</div>
<div class="a" style="left:11px;top:525px;width:903px;height:1px;background:#E3E3E3;"></div>
<div class="a" style="left:16px;top:512px;width:55px;height:13px;background:#FFB000;"></div>
<div class="a" style="left:843px;top:512px;width:59px;height:13px;background:#FFB000;"></div>
<div class="a" style="left:72px;top:512px;width:770px;height:13px;background:#242424;"></div>
<div class="t" style="left:17px;top:515px;color:#10103A;letter-spacing:-0.9px;">GBPCAD</div>
<div class="t" style="left:-20px;top:515px;width:200px;text-align:right;color:#D6D6D6;letter-spacing:0.1px;">10/07/2011 00:20:00</div>
<div class="t" style="left:62px;top:515px;width:200px;text-align:right;color:#D6D6D6;">1.6021</div>
<div class="t" style="left:143px;top:515px;width:200px;text-align:right;color:#48DCD4;">7.18</div>
<div class="t" style="left:226px;top:515px;width:200px;text-align:right;color:#D6D6D6;">50000.00</div>
<div class="t" style="left:308px;top:515px;width:200px;text-align:right;color:#D6D6D6;">1.00</div>
<div class="t" style="left:390px;top:515px;width:200px;text-align:right;color:#D6D6D6;">500.00</div>
<div class="t" style="left:472px;top:515px;width:200px;text-align:right;color:#D6D6D6;">15</div>
<div class="t" style="left:554px;top:515px;width:200px;text-align:right;color:#48DCD4;">33.33</div>
<div class="t" style="left:636px;top:515px;width:200px;text-align:right;color:#48DCD4;">464533</div>
<div class="t" style="left:847px;top:515px;color:#10103A;letter-spacing:-0.9px;">GBPCAD</div>
<div class="a" style="left:11px;top:539px;width:903px;height:1px;background:#E3E3E3;"></div>
<div class="a" style="left:16px;top:526px;width:55px;height:13px;background:#FFB000;"></div>
<div class="a" style="left:843px;top:526px;width:59px;height:13px;background:#FFB000;"></div>
<div class="a" style="left:72px;top:526px;width:770px;height:13px;background:#242424;"></div>
<div class="t" style="left:17px;top:529px;color:#10103A;letter-spacing:-0.9px;">EURCAD</div>
<div class="t" style="left:-20px;top:529px;width:200px;text-align:right;color:#D6D6D6;letter-spacing:0.1px;">10/07/2011 00:20:00</div>
<div class="t" style="left:62px;top:529px;width:200px;text-align:right;color:#D6D6D6;">1.3936</div>
<div class="t" style="left:143px;top:529px;width:200px;text-align:right;color:#48DCD4;">7.18</div>
<div class="t" style="left:226px;top:529px;width:200px;text-align:right;color:#D6D6D6;">50000.00</div>
<div class="t" style="left:308px;top:529px;width:200px;text-align:right;color:#D6D6D6;">1.00</div>
<div class="t" style="left:390px;top:529px;width:200px;text-align:right;color:#D6D6D6;">500.00</div>
<div class="t" style="left:472px;top:529px;width:200px;text-align:right;color:#D6D6D6;">15</div>
<div class="t" style="left:554px;top:529px;width:200px;text-align:right;color:#48DCD4;">33.33</div>
<div class="t" style="left:636px;top:529px;width:200px;text-align:right;color:#48DCD4;">464533</div>
<div class="t" style="left:847px;top:529px;color:#10103A;letter-spacing:-0.9px;">EURCAD</div>
<div class="a" style="left:11px;top:553px;width:903px;height:1px;background:#E3E3E3;"></div>
<div class="a" style="left:16px;top:540px;width:55px;height:13px;background:#FFB000;"></div>
<div class="a" style="left:843px;top:540px;width:59px;height:13px;background:#FFB000;"></div>
<div class="a" style="left:72px;top:540px;width:770px;height:13px;background:#242424;"></div>
<div class="t" style="left:17px;top:543px;color:#10103A;letter-spacing:-0.9px;">AUDCAD</div>
<div class="t" style="left:-20px;top:543px;width:200px;text-align:right;color:#D6D6D6;letter-spacing:0.1px;">10/07/2011 00:20:00</div>
<div class="t" style="left:62px;top:543px;width:200px;text-align:right;color:#D6D6D6;">1.0104</div>
<div class="t" style="left:143px;top:543px;width:200px;text-align:right;color:#48DCD4;">7.18</div>
<div class="t" style="left:226px;top:543px;width:200px;text-align:right;color:#D6D6D6;">50000.00</div>
<div class="t" style="left:308px;top:543px;width:200px;text-align:right;color:#D6D6D6;">1.00</div>
<div class="t" style="left:390px;top:543px;width:200px;text-align:right;color:#D6D6D6;">500.00</div>
<div class="t" style="left:472px;top:543px;width:200px;text-align:right;color:#D6D6D6;">15</div>
<div class="t" style="left:554px;top:543px;width:200px;text-align:right;color:#48DCD4;">33.33</div>
<div class="t" style="left:636px;top:543px;width:200px;text-align:right;color:#48DCD4;">464533</div>
<div class="t" style="left:847px;top:543px;color:#10103A;letter-spacing:-0.9px;">AUDCAD</div>
<div class="a" style="left:11px;top:567px;width:903px;height:1px;background:#E3E3E3;"></div>
<div class="a" style="left:16px;top:554px;width:55px;height:13px;background:#FFB000;"></div>
<div class="a" style="left:843px;top:554px;width:59px;height:13px;background:#FFB000;"></div>
<div class="a" style="left:72px;top:554px;width:770px;height:13px;background:#242424;"></div>
<div class="t" style="left:17px;top:557px;color:#10103A;letter-spacing:-0.9px;">GBPNZD</div>
<div class="t" style="left:-20px;top:557px;width:200px;text-align:right;color:#D6D6D6;letter-spacing:0.1px;">10/07/2011 00:20:00</div>
<div class="t" style="left:62px;top:557px;width:200px;text-align:right;color:#D6D6D6;">2.0054</div>
<div class="t" style="left:143px;top:557px;width:200px;text-align:right;color:#8CFAD0;">5.73</div>
<div class="t" style="left:226px;top:557px;width:200px;text-align:right;color:#D6D6D6;">50000.00</div>
<div class="t" style="left:308px;top:557px;width:200px;text-align:right;color:#D6D6D6;">1.00</div>
<div class="t" style="left:390px;top:557px;width:200px;text-align:right;color:#D6D6D6;">500.00</div>
<div class="t" style="left:472px;top:557px;width:200px;text-align:right;color:#D6D6D6;">15</div>
<div class="t" style="left:554px;top:557px;width:200px;text-align:right;color:#8CFAD0;">33.33</div>
<div class="t" style="left:636px;top:557px;width:200px;text-align:right;color:#8CFAD0;">581640</div>
<div class="t" style="left:847px;top:557px;color:#10103A;letter-spacing:-0.9px;">GBPNZD</div>
<div class="a" style="left:11px;top:581px;width:903px;height:1px;background:#E3E3E3;"></div>
<div class="a" style="left:16px;top:568px;width:55px;height:13px;background:#FFB000;"></div>
<div class="a" style="left:843px;top:568px;width:59px;height:13px;background:#FFB000;"></div>
<div class="a" style="left:72px;top:568px;width:770px;height:13px;background:#242424;"></div>
<div class="t" style="left:17px;top:571px;color:#10103A;letter-spacing:-0.9px;">AUDNZD</div>
<div class="t" style="left:-20px;top:571px;width:200px;text-align:right;color:#D6D6D6;letter-spacing:0.1px;">10/07/2011 00:20:00</div>
<div class="t" style="left:62px;top:571px;width:200px;text-align:right;color:#D6D6D6;">1.2650</div>
<div class="t" style="left:143px;top:571px;width:200px;text-align:right;color:#8CFAD0;">5.73</div>
<div class="t" style="left:226px;top:571px;width:200px;text-align:right;color:#D6D6D6;">50000.00</div>
<div class="t" style="left:308px;top:571px;width:200px;text-align:right;color:#D6D6D6;">1.00</div>
<div class="t" style="left:390px;top:571px;width:200px;text-align:right;color:#D6D6D6;">500.00</div>
<div class="t" style="left:472px;top:571px;width:200px;text-align:right;color:#D6D6D6;">15</div>
<div class="t" style="left:554px;top:571px;width:200px;text-align:right;color:#8CFAD0;">33.33</div>
<div class="t" style="left:636px;top:571px;width:200px;text-align:right;color:#8CFAD0;">581640</div>
<div class="t" style="left:847px;top:571px;color:#10103A;letter-spacing:-0.9px;">AUDNZD</div>
<div class="a" style="left:11px;top:595px;width:903px;height:1px;background:#E3E3E3;"></div>
<div class="a" style="left:16px;top:582px;width:55px;height:13px;background:#FFB000;"></div>
<div class="a" style="left:843px;top:582px;width:59px;height:13px;background:#FFB000;"></div>
<div class="a" style="left:72px;top:582px;width:770px;height:13px;background:#242424;"></div>
<div class="t" style="left:17px;top:585px;color:#10103A;letter-spacing:-0.9px;">EURNZD</div>
<div class="t" style="left:-20px;top:585px;width:200px;text-align:right;color:#D6D6D6;letter-spacing:0.1px;">10/07/2011 00:20:00</div>
<div class="t" style="left:62px;top:585px;width:200px;text-align:right;color:#D6D6D6;">1.7449</div>
<div class="t" style="left:143px;top:585px;width:200px;text-align:right;color:#8CFAD0;">5.73</div>
<div class="t" style="left:226px;top:585px;width:200px;text-align:right;color:#D6D6D6;">50000.00</div>
<div class="t" style="left:308px;top:585px;width:200px;text-align:right;color:#D6D6D6;">1.00</div>
<div class="t" style="left:390px;top:585px;width:200px;text-align:right;color:#D6D6D6;">500.00</div>
<div class="t" style="left:472px;top:585px;width:200px;text-align:right;color:#D6D6D6;">15</div>
<div class="t" style="left:554px;top:585px;width:200px;text-align:right;color:#8CFAD0;">33.33</div>
<div class="t" style="left:636px;top:585px;width:200px;text-align:right;color:#8CFAD0;">581640</div>
<div class="t" style="left:847px;top:585px;color:#10103A;letter-spacing:-0.9px;">EURNZD</div>
<div class="a" style="left:11px;top:609px;width:903px;height:1px;background:#E3E3E3;"></div>
<div class="a" style="left:16px;top:596px;width:55px;height:13px;background:#FFB000;"></div>
<div class="a" style="left:843px;top:596px;width:59px;height:13px;background:#FFB000;"></div>
<div class="a" style="left:72px;top:596px;width:770px;height:13px;background:#242424;"></div>
<div class="t" style="left:17px;top:599px;color:#10103A;letter-spacing:-0.9px;">USDDKK</div>
<div class="t" style="left:-20px;top:599px;width:200px;text-align:right;color:#D6D6D6;letter-spacing:0.1px;">10/07/2011 00:20:00</div>
<div class="t" style="left:62px;top:599px;width:200px;text-align:right;color:#D6D6D6;">5.5444</div>
<div class="t" style="left:143px;top:599px;width:200px;text-align:right;color:#F0F0F0;">1.34</div>
<div class="t" style="left:226px;top:599px;width:200px;text-align:right;color:#D6D6D6;">50000.00</div>
<div class="t" style="left:308px;top:599px;width:200px;text-align:right;color:#D6D6D6;">1.00</div>
<div class="t" style="left:390px;top:599px;width:200px;text-align:right;color:#D6D6D6;">500.00</div>
<div class="t" style="left:472px;top:599px;width:200px;text-align:right;color:#D6D6D6;">15</div>
<div class="t" style="left:554px;top:599px;width:200px;text-align:right;color:#F0F0F0;">33.33</div>
<div class="t" style="left:636px;top:599px;width:200px;text-align:right;color:#F0F0F0;">2481137</div>
<div class="t" style="left:847px;top:599px;color:#10103A;letter-spacing:-0.9px;">USDDKK</div>
<div class="a" style="left:71px;top:218px;width:1px;height:404px;background:#E3E3E3;"></div>
<div class="a" style="left:186px;top:218px;width:1px;height:404px;background:#E3E3E3;"></div>
<div class="a" style="left:268px;top:218px;width:1px;height:404px;background:#E3E3E3;"></div>
<div class="a" style="left:350px;top:218px;width:1px;height:404px;background:#E3E3E3;"></div>
<div class="a" style="left:432px;top:218px;width:1px;height:404px;background:#E3E3E3;"></div>
<div class="a" style="left:514px;top:218px;width:1px;height:404px;background:#E3E3E3;"></div>
<div class="a" style="left:596px;top:218px;width:1px;height:404px;background:#E3E3E3;"></div>
<div class="a" style="left:678px;top:218px;width:1px;height:404px;background:#E3E3E3;"></div>
<div class="a" style="left:760px;top:218px;width:1px;height:404px;background:#E3E3E3;"></div>
<div class="a" style="left:842px;top:218px;width:1px;height:404px;background:#E3E3E3;"></div>
<div class="a" style="left:902px;top:218px;width:1px;height:404px;background:#E3E3E3;"></div>
<div class="a" style="left:9px;top:625px;width:907px;height:16px;border-top:1px solid #A0A0A0;border-left:1px solid #A0A0A0;border-right:1px solid #fff;border-bottom:1px solid #fff;"></div>
<div class="t" style="left:10px;top:627px;">Number of rows: 28</div>
<svg class="a" style="left:906px;top:636px;" width="20" height="14" shape-rendering="crispEdges"><rect x="19" y="3" width="1" height="1" fill="#FFFFFF"/><rect x="18" y="4" width="1" height="1" fill="#FFFFFF"/><rect x="19" y="4" width="1" height="1" fill="#A0A0A0"/><rect x="17" y="5" width="1" height="1" fill="#FFFFFF"/><rect x="18" y="5" width="1" height="1" fill="#A0A0A0"/><rect x="19" y="5" width="1" height="1" fill="#A0A0A0"/><rect x="16" y="6" width="1" height="1" fill="#FFFFFF"/><rect x="17" y="6" width="1" height="1" fill="#A0A0A0"/><rect x="18" y="6" width="1" height="1" fill="#A0A0A0"/><rect x="15" y="7" width="1" height="1" fill="#FFFFFF"/><rect x="16" y="7" width="1" height="1" fill="#A0A0A0"/><rect x="17" y="7" width="1" height="1" fill="#A0A0A0"/><rect x="19" y="7" width="1" height="1" fill="#FFFFFF"/><rect x="14" y="8" width="1" height="1" fill="#FFFFFF"/><rect x="15" y="8" width="1" height="1" fill="#A0A0A0"/><rect x="16" y="8" width="1" height="1" fill="#A0A0A0"/><rect x="18" y="8" width="1" height="1" fill="#FFFFFF"/><rect x="19" y="8" width="1" height="1" fill="#A0A0A0"/><rect x="13" y="9" width="1" height="1" fill="#FFFFFF"/><rect x="14" y="9" width="1" height="1" fill="#A0A0A0"/><rect x="15" y="9" width="1" height="1" fill="#A0A0A0"/><rect x="17" y="9" width="1" height="1" fill="#FFFFFF"/><rect x="18" y="9" width="1" height="1" fill="#A0A0A0"/><rect x="19" y="9" width="1" height="1" fill="#A0A0A0"/><rect x="12" y="10" width="1" height="1" fill="#FFFFFF"/><rect x="13" y="10" width="1" height="1" fill="#A0A0A0"/><rect x="14" y="10" width="1" height="1" fill="#A0A0A0"/><rect x="16" y="10" width="1" height="1" fill="#FFFFFF"/><rect x="17" y="10" width="1" height="1" fill="#A0A0A0"/><rect x="18" y="10" width="1" height="1" fill="#A0A0A0"/><rect x="11" y="11" width="1" height="1" fill="#FFFFFF"/><rect x="12" y="11" width="1" height="1" fill="#A0A0A0"/><rect x="13" y="11" width="1" height="1" fill="#A0A0A0"/><rect x="15" y="11" width="1" height="1" fill="#FFFFFF"/><rect x="16" y="11" width="1" height="1" fill="#A0A0A0"/><rect x="17" y="11" width="1" height="1" fill="#A0A0A0"/><rect x="19" y="11" width="1" height="1" fill="#FFFFFF"/><rect x="10" y="12" width="1" height="1" fill="#FFFFFF"/><rect x="11" y="12" width="1" height="1" fill="#A0A0A0"/><rect x="12" y="12" width="1" height="1" fill="#A0A0A0"/><rect x="14" y="12" width="1" height="1" fill="#FFFFFF"/><rect x="15" y="12" width="1" height="1" fill="#A0A0A0"/><rect x="16" y="12" width="1" height="1" fill="#A0A0A0"/><rect x="18" y="12" width="1" height="1" fill="#FFFFFF"/><rect x="19" y="12" width="1" height="1" fill="#A0A0A0"/><rect x="9" y="13" width="1" height="1" fill="#FFFFFF"/><rect x="10" y="13" width="1" height="1" fill="#A0A0A0"/><rect x="11" y="13" width="1" height="1" fill="#A0A0A0"/><rect x="13" y="13" width="1" height="1" fill="#FFFFFF"/><rect x="14" y="13" width="1" height="1" fill="#A0A0A0"/><rect x="15" y="13" width="1" height="1" fill="#A0A0A0"/><rect x="17" y="13" width="1" height="1" fill="#FFFFFF"/><rect x="18" y="13" width="1" height="1" fill="#A0A0A0"/><rect x="19" y="13" width="1" height="1" fill="#A0A0A0"/></svg>
</body></html>
